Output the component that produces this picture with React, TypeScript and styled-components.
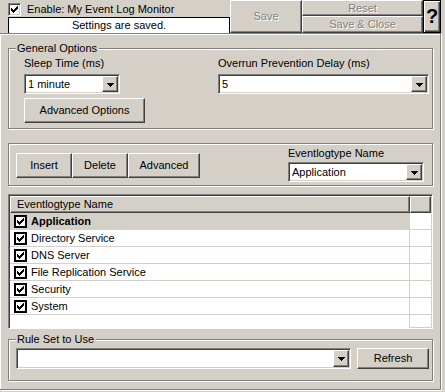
import React from 'react';
import styled, { createGlobalStyle, css } from 'styled-components';

const GlobalStyle = createGlobalStyle`
  html, body {
    margin: 0;
    padding: 0;
    background: #d4d0c8;
  }
  body {
    font-family: "Liberation Sans", Arial, sans-serif;
    font-size: 11px;
    color: #000;
  }
  * {
    box-sizing: border-box;
  }
`;

const raised = css`
  background: #d4d0c8;
  border: 1px solid;
  border-color: #fff #404040 #404040 #fff;
  box-shadow: inset -1px -1px #808080, inset 1px 1px #d4d0c8;
`;

const sunken = css`
  border: 1px solid;
  border-color: #808080 #fff #fff #808080;
  box-shadow: inset 1px 1px #404040, inset -1px -1px #d4d0c8;
`;

const etched = css`
  border: 1px solid #808080;
  box-shadow: inset 1px 1px #fff, 1px 1px #fff;
`;

const CheckMark = () => (
  <svg width="7" height="7" viewBox="0 0 7 7" shapeRendering="crispEdges">
    <rect x="6" y="0" width="1" height="1" />
    <rect x="5" y="1" width="2" height="1" />
    <rect x="0" y="2" width="1" height="1" />
    <rect x="4" y="2" width="3" height="1" />
    <rect x="0" y="3" width="2" height="1" />
    <rect x="3" y="3" width="3" height="1" />
    <rect x="0" y="4" width="5" height="1" />
    <rect x="1" y="5" width="3" height="1" />
    <rect x="2" y="6" width="1" height="1" />
  </svg>
);

const Arrow = () => (
  <svg width="7" height="4" viewBox="0 0 7 4" shapeRendering="crispEdges">
    <path d="M0 0h7v1h-1v1h-1v1h-1v1h-1v-1h-1v-1h-1v-1h-1z" />
  </svg>
);

const Window = styled.div`
  width: 445px;
  height: 392px;
  overflow: hidden;
  background: #d4d0c8;
`;

const TopBar = styled.div`
  display: flex;
  height: 33px;
`;

const EnableArea = styled.div`
  display: flex;
  flex-direction: column;
  width: 222px;
  margin-left: 8px;
`;

const CheckRow = styled.label`
  display: flex;
  align-items: center;
  gap: 6px;
  height: 17px;
  padding-top: 1px;
  line-height: 13px;
`;

const Check3D = styled.span`
  ${sunken};
  width: 13px;
  height: 13px;
  background: #fff;
  display: flex;
  align-items: center;
  justify-content: center;
`;

const StatusBox = styled.div`
  height: 16px;
  border: 1px solid #000;
  border-bottom: none;
  background: #fff;
  display: flex;
  align-items: center;
  justify-content: center;
  line-height: 13px;
`;

const Button = styled.button<{ $w: number; $h: number; $disabled?: boolean }>`
  ${raised};
  width: ${({ $w }) => $w}px;
  height: ${({ $h }) => $h}px;
  margin: 0;
  padding: 0;
  font: inherit;
  line-height: 13px;
  color: ${({ $disabled }) => ($disabled ? '#808080' : '#000')};
  text-shadow: ${({ $disabled }) => ($disabled ? '1px 1px #fff' : 'none')};
  display: flex;
  align-items: center;
  justify-content: center;
  flex-shrink: 0;
`;

const ButtonStack = styled.div`
  display: flex;
  flex-direction: column;
`;

const HelpButton = styled.button`
  width: 18px;
  height: 33px;
  margin: 0;
  padding: 0 0 1px;
  background: #d4d0c8;
  border: 1px solid #000;
  box-shadow: inset 1px 1px #fff, inset -1px -1px #404040, inset -2px -2px #808080;
  font-family: "Liberation Sans", Arial, sans-serif;
  font-weight: bold;
  font-size: 20px;
  line-height: 20px;
  color: #000;
`;

const Frame = styled.div`
  width: 441px;
  height: 357px;
  border-top: 1px solid #808080;
  border-right: 1px solid #808080;
  border-bottom: 1px solid #808080;
  box-shadow: inset 1px 1px #fff, 1px 1px #fff;
  padding: 14px 0 0 8px;
  display: flex;
  flex-direction: column;
`;

const Group = styled.div`
  ${etched};
  position: relative;
  width: 425px;
`;

const GroupLabel = styled.span`
  position: absolute;
  top: -7px;
  left: 7px;
  padding: 0 2px 0 1px;
  line-height: 13px;
  background: #d4d0c8;
`;

const GeneralGroup = styled(Group)`
  height: 81px;
  padding: 8px 4px 0 15px;
  display: grid;
  grid-template-columns: 194px 1fr;
  align-content: start;
`;

const Column = styled.div`
  display: flex;
  flex-direction: column;
  align-items: flex-start;
`;

const FieldLabel = styled.div<{ $gap: number }>`
  line-height: 13px;
  margin-bottom: ${({ $gap }) => $gap}px;
`;

const ActionGroup = styled(Group)`
  height: 43px;
  margin-top: 14px;
  padding: 0 8px 0 7px;
  display: flex;
  justify-content: space-between;
  align-items: flex-start;
`;

const ButtonRow = styled.div`
  display: flex;
  margin-top: 9px;
`;

const NameColumn = styled(Column)`
  margin-top: 3px;
`;

const ComboBox = styled.div<{ $w: number; $h: number }>`
  ${sunken};
  width: ${({ $w }) => $w}px;
  height: ${({ $h }) => $h}px;
  padding: 1px;
  background: #fff;
  display: flex;
`;

const ComboText = styled.span`
  flex: 1;
  display: flex;
  align-items: center;
  padding-left: 2px;
  line-height: 13px;
`;

const DropButton = styled.span`
  ${raised};
  width: 16px;
  display: flex;
  align-items: center;
  justify-content: center;
  padding-top: 1px;
`;

const ListView = styled.div`
  ${sunken};
  width: 425px;
  height: 135px;
  margin-top: 8px;
  padding: 1px;
  background: #fff;
  overflow: hidden;
`;

const HeaderRow = styled.div`
  display: flex;
  height: 17px;
`;

const HeaderCell = styled.div<{ $w?: number }>`
  ${raised};
  ${({ $w }) => ($w ? `width: ${$w}px;` : 'flex: 1;')}
  padding-left: 6px;
  display: flex;
  align-items: center;
  line-height: 13px;
`;

const Row = styled.div`
  display: flex;
  height: 17px;
`;

const NameCell = styled.div<{ $selected?: boolean }>`
  width: 400px;
  border-right: 1px solid #d4d0c8;
  border-bottom: 1px solid #d4d0c8;
  background: ${({ $selected }) => ($selected ? '#d4d0c8' : '#fff')};
  font-weight: ${({ $selected }) => ($selected ? 'bold' : 'normal')};
  padding-left: 4px;
  display: flex;
  align-items: center;
  gap: 4px;
  line-height: 13px;
`;

const EmptyCell = styled.div`
  flex: 1;
  border-bottom: 1px solid #d4d0c8;
`;

const FlatCheck = styled.span`
  width: 13px;
  height: 13px;
  border: 2px solid #000;
  background: #fff;
  display: flex;
  align-items: center;
  justify-content: center;
`;

const RuleGroup = styled(Group)`
  height: 42px;
  margin-top: 10px;
  padding: 8px 0 0 7px;
  display: flex;
  gap: 6px;
  align-items: flex-start;
`;

type ComboProps = { width: number; height: number; value: string };

function Combo({ width, height, value }: ComboProps) {
  return (
    <ComboBox $w={width} $h={height}>
      <ComboText>{value}</ComboText>
      <DropButton>
        <Arrow />
      </DropButton>
    </ComboBox>
  );
}

const logTypes = [
  'Application',
  'Directory Service',
  'DNS Server',
  'File Replication Service',
  'Security',
  'System',
];

export default function App() {
  return (
    <Window>
      <GlobalStyle />
      <TopBar>
        <EnableArea>
          <CheckRow>
            <Check3D>
              <CheckMark />
            </Check3D>
            Enable: My Event Log Monitor
          </CheckRow>
          <StatusBox>Settings are saved.</StatusBox>
        </EnableArea>
        <Button $w={72} $h={33} $disabled>Save</Button>
        <ButtonStack>
          <Button $w={121} $h={16} $disabled>Reset</Button>
          <Button $w={121} $h={17} $disabled>Save &amp; Close</Button>
        </ButtonStack>
        <HelpButton>?</HelpButton>
      </TopBar>

      <Frame>
        <GeneralGroup>
          <GroupLabel>General Options</GroupLabel>
          <Column>
            <FieldLabel $gap={4}>Sleep Time (ms)</FieldLabel>
            <Combo width={96} height={20} value="1 minute" />
            <Button $w={121} $h={25} style={{ marginTop: 4 }}>Advanced Options</Button>
          </Column>
          <Column>
            <FieldLabel $gap={4}>Overrun Prevention Delay (ms)</FieldLabel>
            <Combo width={211} height={20} value="5" />
          </Column>
        </GeneralGroup>

        <ActionGroup>
          <ButtonRow>
            <Button $w={56} $h={25}>Insert</Button>
            <Button $w={56} $h={25}>Delete</Button>
            <Button $w={72} $h={25}>Advanced</Button>
          </ButtonRow>
          <NameColumn>
            <FieldLabel $gap={2}>Eventlogtype Name</FieldLabel>
            <Combo width={136} height={20} value="Application" />
          </NameColumn>
        </ActionGroup>

        <ListView>
          <HeaderRow>
            <HeaderCell $w={400}>Eventlogtype Name</HeaderCell>
            <HeaderCell />
          </HeaderRow>
          {logTypes.map((name, i) => (
            <Row key={name}>
              <NameCell $selected={i === 0}>
                <FlatCheck>
                  <CheckMark />
                </FlatCheck>
                {name}
              </NameCell>
              <EmptyCell />
            </Row>
          ))}
          <Row>
            <NameCell />
            <EmptyCell />
          </Row>
        </ListView>

        <RuleGroup>
          <GroupLabel>Rule Set to Use</GroupLabel>
          <Combo width={335} height={21} value="" />
          <Button $w={72} $h={21}>Refresh</Button>
        </RuleGroup>
      </Frame>
    </Window>
  );
}
